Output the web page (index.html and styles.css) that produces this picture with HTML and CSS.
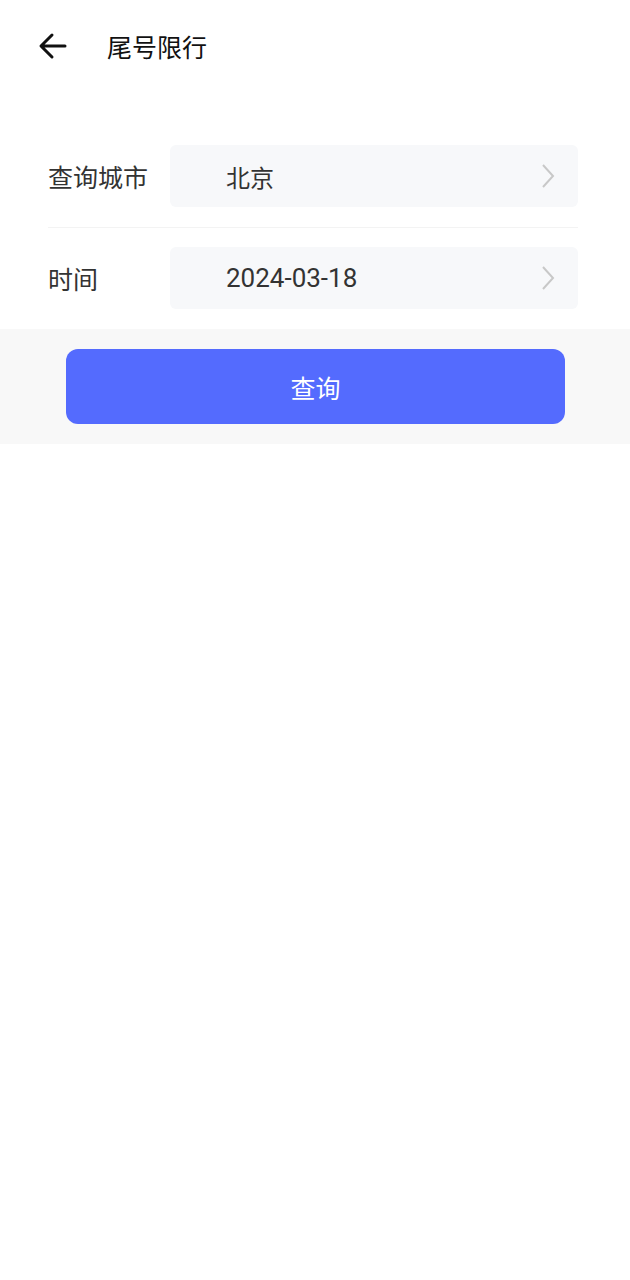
FILE: index.html
```html
<!DOCTYPE html>
<html lang="zh-CN">
<head>
  <meta charset="UTF-8">
  <meta name="viewport" content="width=device-width, initial-scale=1.0">
  <link rel="stylesheet" href="styles.css">
  <title>尾号限行</title>
</head>
<body>
  <!-- 顶部导航 -->
  <div class="header">
    <span class="back">
      <svg width="30" height="30" viewBox="0 0 30 30">
        <path d="M27 15H4M14 4L3 15l11 11" fill="none" stroke="#111" stroke-width="3" stroke-linecap="round" stroke-linejoin="round"/>
      </svg>
    </span>
    <div class="title">尾号限行</div>
  </div>

  <!-- 查询表单 -->
  <div class="form">
    <div class="row line">
      <div class="label">查询城市</div>
      <div class="field">
        <span class="value cn">北京</span>
        <svg class="arrow" width="16" height="26" viewBox="0 0 16 26">
          <path d="M3 2l10 11L3 24" fill="none" stroke="#c8c8c8" stroke-width="2"/>
        </svg>
      </div>
    </div>
    <div class="row">
      <div class="label">时间</div>
      <div class="field">
        <span class="value">2024-03-18</span>
        <svg class="arrow" width="16" height="26" viewBox="0 0 16 26">
          <path d="M3 2l10 11L3 24" fill="none" stroke="#c8c8c8" stroke-width="2"/>
        </svg>
      </div>
    </div>
  </div>

  <div class="actions">
    <button class="btn">查询</button>
  </div>
</body>
</html>
```

FILE: styles.css
```css
body {
  margin: 0;
  background: #fff;
  font-family: Roboto, "Noto Sans CJK SC", sans-serif;
  color: #333;
}

.header {
  display: flex;
  align-items: center;
  height: 92px;
  padding-left: 38px;
}

.back {
  display: flex;
  width: 30px;
  height: 30px;
}

.title {
  margin-left: 39px;
  font-size: 25px;
  color: #111;
}

.form {
  padding-top: 33px;
}

.row {
  display: flex;
  align-items: center;
  margin: 0 52px 0 48px;
  padding: 19px 0 20px;
}

.row.line {
  padding: 20px 0;
  border-bottom: 1px solid #f3f3f3;
}

.label {
  width: 122px;
  font-size: 25px;
  color: #333;
}

.field {
  flex: 1;
  display: flex;
  align-items: center;
  justify-content: space-between;
  height: 62px;
  padding: 0 22px 0 56px;
  background: #f7f8fa;
  border-radius: 6px;
}

.value {
  font-size: 26px;
  color: #333;
}

.value.cn {
  font-size: 24px;
}

.actions {
  background: #f8f8f8;
  padding: 20px 65px 20px 66px;
}

.btn {
  display: block;
  width: 100%;
  height: 75px;
  border: none;
  border-radius: 12px;
  background: #546bfe;
  color: #fff;
  font-family: Roboto, "Noto Sans CJK SC", sans-serif;
  font-size: 25px;
}
```
